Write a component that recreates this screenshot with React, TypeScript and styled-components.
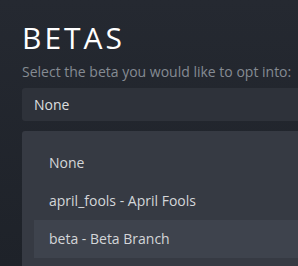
import React from "react";
import styled, { createGlobalStyle } from "styled-components";

const GlobalStyle = createGlobalStyle`
  html, body {
    margin: 0;
    padding: 0;
    height: 100%;
    overflow: hidden;
    background: linear-gradient(180deg, #252931 0%, #1e2229 100%);
  }
  body {
    font-family: "Open Sans", "Noto Sans", sans-serif;
  }
`;

const Page = styled.div`
  width: 460px;
  padding: 18px 0 0 22px;
  box-sizing: border-box;
`;

const Title = styled.h1`
  margin: 0;
  font-size: 30px;
  font-weight: 400;
  letter-spacing: 3px;
  line-height: 40px;
  color: #ffffff;
`;

const Subtitle = styled.p`
  margin: 5px 0 0;
  font-size: 14px;
  line-height: 18px;
  color: #858b93;
`;

const Select = styled.div`
  margin-top: 7px;
  height: 33px;
  display: flex;
  align-items: center;
  padding-left: 12px;
  background: #2e323a;
  border-radius: 3px 0 0 3px;
  font-size: 14px;
  color: #dcdedf;
`;

const Menu = styled.ul`
  list-style: none;
  margin: 10px 0 0;
  padding: 12.5px 0 12px 12px;
  background: #363a43;
  border-radius: 3px 0 0 0;
`;

const Option = styled.li<{ $active?: boolean }>`
  height: 38px;
  display: flex;
  align-items: center;
  padding-left: 15px;
  font-size: 14px;
  color: #d4d6d9;
  background: ${(p) => (p.$active ? "#3e434d" : "transparent")};
`;

const options = ["None", "april_fools - April Fools", "beta - Beta Branch"];

export default function App() {
  return (
    <>
      <GlobalStyle />
      <Page>
        <Title>BETAS</Title>
        <Subtitle>Select the beta you would like to opt into:</Subtitle>
        <Select>None</Select>
        <Menu>
          {options.map((o, i) => (
            <Option key={o} $active={i === 2}>
              {o}
            </Option>
          ))}
        </Menu>
      </Page>
    </>
  );
}
